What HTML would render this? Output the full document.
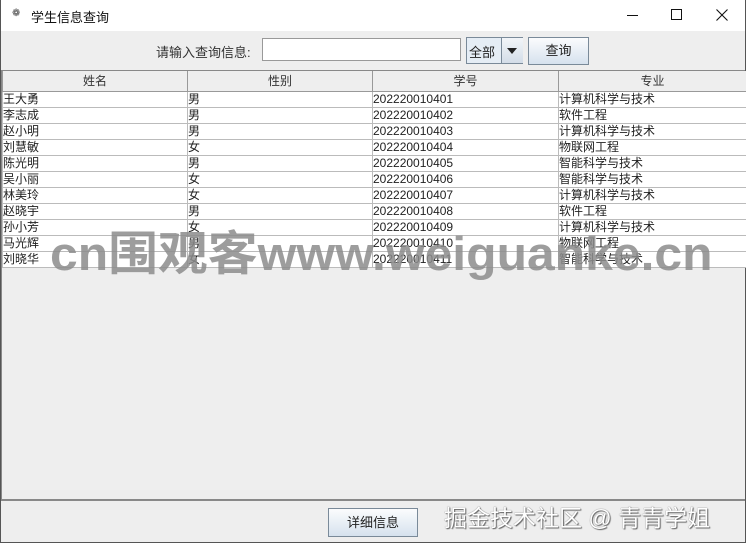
<!DOCTYPE html>
<html><head><meta charset="utf-8"><style>
*{margin:0;padding:0;box-sizing:border-box}
body{width:746px;height:543px;overflow:hidden;background:#eeeeee;font-family:"Liberation Sans","Noto Sans CJK SC",sans-serif;position:relative;font-size:12px;color:#333}
.abs{position:absolute}
#title{left:0;top:0;width:746px;height:31px;background:#fff;border-left:1px solid #555;border-right:1px solid #555}
#frame{left:0;top:31px;width:746px;height:512px;border-left:1px solid #555;border-right:1px solid #555;border-bottom:1px solid #555}
table{border-collapse:collapse;table-layout:fixed}
td{height:16px;border:1px solid #bbb;border-top:none;padding:0;font-size:12px;line-height:15px;white-space:nowrap;overflow:hidden;color:#222}
th{height:20px;font-weight:normal;border:1px solid #999;border-top:none;background:#eeeeee;font-size:12px;color:#333}
.btn{border:1px solid #7a8a99;background:linear-gradient(#fbfcfd,#d6e2ee);text-align:center;font-size:13px;color:#222}
</style></head><body>
<div id="title" class="abs">
 <div class="abs" style="left:11px;top:8px;font-size:10px;color:#444">❁</div>
 <div class="abs" style="left:30px;top:7px;font-size:13px;color:#111">学生信息查询</div>
 <div class="abs" style="left:626px;top:15px;width:11px;height:1px;background:#111"></div>
 <div class="abs" style="left:670px;top:9px;width:11px;height:11px;border:1px solid #111"></div>
 <svg class="abs" style="left:715px;top:9px" width="12" height="12"><path d="M0.5 0.5L11.5 11.5M11.5 0.5L0.5 11.5" stroke="#111" stroke-width="1.1"/></svg>
</div>
<div id="frame" class="abs"></div>
<div class="abs" style="left:156px;top:42px;font-size:13px;color:#333">请输入查询信息:</div>
<div class="abs" style="left:262px;top:38px;width:199px;height:23px;background:#fff;border:1px solid #999"></div>
<div class="abs" style="left:466px;top:37px;width:57px;height:27px;border:1px solid #7a8a99;background:#e5edf5">
 <div class="abs" style="left:2px;top:4px;font-size:13px;color:#222">全部</div>
 <div class="abs" style="left:34px;top:0;width:22px;height:25px;border-left:1px solid #7a8a99;background:linear-gradient(#f2f5f8,#d3dde8)"></div>
 <div class="abs" style="left:40px;top:10px;width:0;height:0;border-left:5px solid transparent;border-right:5px solid transparent;border-top:6px solid #222"></div>
</div>
<div class="abs btn" style="left:528px;top:37px;width:61px;height:28px;line-height:26px">查询</div>
<div class="abs" style="left:1px;top:70px;width:744px;height:431px;border:1px solid #888;border-right:none;border-bottom:2px solid #888;background:#eeeeee">
<table style="width:744px">
<colgroup><col style="width:185px"><col style="width:185px"><col style="width:186px"><col style="width:188px"></colgroup>
<tr><th>姓名</th><th>性别</th><th>学号</th><th>专业</th></tr>
<tr style="background:#fff"><td>王大勇</td><td>男</td><td>202220010401</td><td>计算机科学与技术</td></tr>
<tr style="background:#fff"><td>李志成</td><td>男</td><td>202220010402</td><td>软件工程</td></tr>
<tr style="background:#fff"><td>赵小明</td><td>男</td><td>202220010403</td><td>计算机科学与技术</td></tr>
<tr style="background:#fff"><td>刘慧敏</td><td>女</td><td>202220010404</td><td>物联网工程</td></tr>
<tr style="background:#fff"><td>陈光明</td><td>男</td><td>202220010405</td><td>智能科学与技术</td></tr>
<tr style="background:#fff"><td>吴小丽</td><td>女</td><td>202220010406</td><td>智能科学与技术</td></tr>
<tr style="background:#fff"><td>林美玲</td><td>女</td><td>202220010407</td><td>计算机科学与技术</td></tr>
<tr style="background:#fff"><td>赵晓宇</td><td>男</td><td>202220010408</td><td>软件工程</td></tr>
<tr style="background:#fff"><td>孙小芳</td><td>女</td><td>202220010409</td><td>计算机科学与技术</td></tr>
<tr style="background:#fff"><td>马光辉</td><td>男</td><td>202220010410</td><td>物联网工程</td></tr>
<tr style="background:#fff"><td>刘晓华</td><td>女</td><td>202220010411</td><td>智能科学与技术</td></tr>
</table>
</div>
<div class="abs" style="left:50px;top:228px;font-size:47px;font-weight:bold;color:rgba(140,140,140,0.85);letter-spacing:0px;white-space:nowrap;line-height:52px;transform:scaleX(1.06);transform-origin:0 0">cn围观客www.weiguanke.cn</div>
<div class="abs btn" style="left:328px;top:508px;width:90px;height:29px;line-height:27px">详细信息</div>
<div class="abs" style="left:444px;top:499px;font-size:23px;color:#fff;text-shadow:0 0 1px #555,1px 1px 1px #666;white-space:nowrap">掘金技术社区 @ 青青学姐</div>
</body></html>
